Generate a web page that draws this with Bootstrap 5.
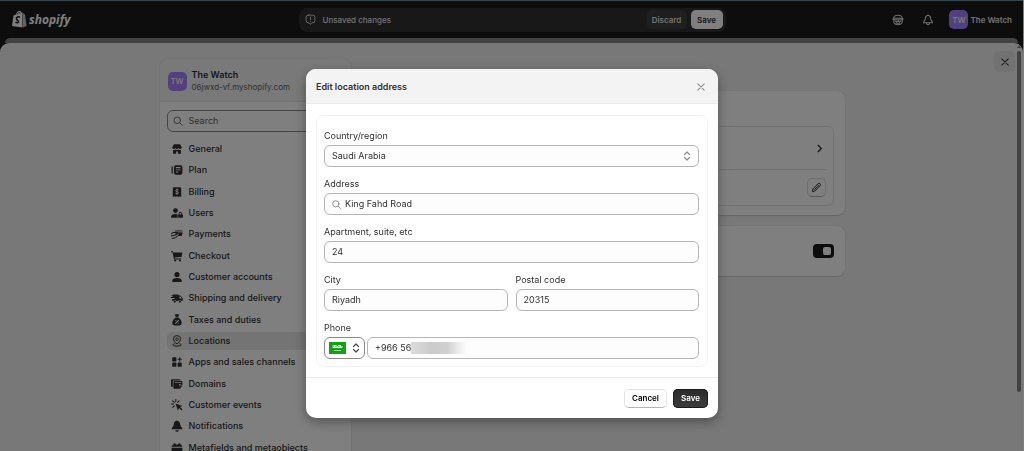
<!DOCTYPE html>
<html lang="en">
<head>
<meta charset="utf-8">
<meta name="viewport" content="width=device-width, initial-scale=1">
<title>The Watch · Locations</title>
<link href="https://cdn.jsdelivr.net/npm/bootstrap@5.3.0/dist/css/bootstrap.min.css" rel="stylesheet">
<style>
body{font-family:Inter,"Liberation Sans",sans-serif;font-size:9px;line-height:14px;color:#303030;background:#1a1a1a;height:100vh;overflow:hidden}
svg{display:block;flex:none}
.shell{height:100vh;border-right:1px solid #fff}
.topbar{height:38px;border-top:1px solid #748c9c;padding:0 11px 0 12px;color:#e3e3e3;font-size:8px}
.wordmark{font-family:"Open Sans",sans-serif;font-weight:700;font-style:italic;font-size:12px;line-height:16px;color:#fff;text-decoration:none;gap:2px}
.side{flex:1 1 0}
.savebar{width:427px;height:24px;border-radius:8px;background:#303030;padding:0 3px 0 6px;font-weight:500}
.savebar span{margin-left:7px}
.savebar button,.btn-flat{font-size:8px;line-height:14px;font-weight:600;border:0;border-radius:5px;height:19px;padding:0 5px}
.savebar .discard{background:#3e3e3e;color:#e3e3e3;width:40px}
.savebar .keep{background:#fff;color:#303030;width:32px}
.tools{gap:15px}
.tools>svg{margin-left:3px}
.who{gap:2px}
.avatar{width:19px;height:19px;border-radius:5px;background:#a680ff;color:#fff;font-size:8px;font-weight:500}
.under-sheet{height:5px;margin:0 5px;border-radius:7px 7px 0 0;background:#848484}
.sheet{background:#f1f1f1;border-radius:9px 9px 0 0;min-height:0}
.wrap{max-width:685px;padding-top:16px}
.sheet-pad{padding-right:19px}
.sidebar{width:191px;background:#fff;border-radius:8px 8px 0 0;box-shadow:0 0 1px #999}
.shop-head{height:43px;background:#f3f3f3;border-bottom:1px solid #ebebeb;padding:2px 8px 0;border-radius:8px 8px 0 0;line-height:13px;gap:5px}
.shop-url{color:#616161;font-size:8px}
.find{height:22px;border:1px solid #8a8a8a;border-radius:6px;padding:0 5px;margin:8px 7px 0;gap:6px}
.find input,.field input{border:0;background:none;outline:0;padding:0;width:100%;min-width:0;color:inherit}
.find input::placeholder{color:#616161}
.menu{height:317px;margin:8px 7px 0}
.menu a{height:18px;flex:none;padding:0 4px;gap:6px;border-radius:5px;color:#303030;text-decoration:none;font-weight:500}
.menu a.active{background:#e8e8e8}
.menu svg{width:12px;height:12px;fill:#303030}
.main-col{padding-top:32px;gap:11px}
.panel{background:#fff;border-radius:8px;box-shadow:0 1px 1px #ccc,0 0 1px #bbb;padding:11px 11px 9px}
.second{height:50px;padding-top:9px}
.inner{border:1px solid #e3e3e3;border-radius:6px;padding:0 7px}
.line-a{height:43px;border-bottom:1px solid #e3e3e3;padding-right:2px}
.line-b{height:35px}
.icon-btn{width:19px;height:19px;border-radius:5px;border:1px solid #dcdcdc;border-bottom-color:#b0b0b0;background:#fff;padding:0}
.toggle{appearance:none;width:21px;height:14px;border-radius:4px;background:#1a1a1a;margin:0;display:flex;justify-content:flex-end;padding:3px}
.toggle::before{content:"";width:8px;height:8px;border-radius:2px;background:#fff}
.close-sheet{position:absolute;top:8px;right:8px;width:21px;height:21px;border:0;border-radius:5px;background:#e5e5e5;padding:0}
.scroller{position:absolute;top:0;right:2px;bottom:59px;width:4px}
.scroller i{width:4px;border-radius:2px;background:#858585}
.scroller b{border:2px solid transparent;border-bottom:3px solid #858585;border-top:0;margin:2px 0 3px}
.modal-backdrop{--bs-backdrop-opacity:.5}
.modal-dialog{max-width:412px;margin:69px auto 0}
.modal-content{border:0;border-radius:10px;overflow:hidden;box-shadow:0 4px 12px rgba(0,0,0,.35);color:#303030}
.modal-header{height:35px;background:#f3f3f3;padding:2px 10px 0;border-bottom:1px solid #ebebeb}
.modal-header h1{font-size:9px;line-height:14px;font-weight:600}
.modal-header button{border:0;background:none;padding:0;margin-right:3px}
.modal-body{padding:11px 10px 10px}
.form-box{border:1px solid #f0f0f0;border-radius:8px;padding:13px 8px 7px 7px;gap:10px}
.form-box label{margin-bottom:2px;display:block}
.field{height:22px;border:1px solid #b5b5b5;border-radius:6px;background:#fdfdfd;padding:0 7px;position:relative}
.field select{appearance:none;border:0;background:none;outline:0;padding:0;width:100%;color:inherit}
.phone-row{gap:2px}
.flag-field{width:41px;padding:0 4px;border-color:#8a8a8a}
.flag-field select{position:absolute;inset:0;opacity:0}
.mask{position:absolute;left:43px;top:4px;width:56px;height:12px;background:linear-gradient(90deg,#dcdcdc,#cbcbcb 35%,#d0d0d0 65%,#ececec 85%,#fdfdfd)}
.modal-footer{padding:10px 10px;height:41px;border-top:1px solid #ebebeb;gap:6px}
.modal-footer>*{margin:0}
.cancel{background:#fff;border:1px solid #e3e3e3!important;border-bottom-color:#b5b5b5!important;width:43px}
.save{background:linear-gradient(#2a2a2a,#3c3c3c);color:#fff;box-shadow:inset 0 0 0 1px #1a1a1a;width:35px}
</style>
</head>
<body>
<div class="shell d-flex flex-column">
<header class="topbar d-flex align-items-center flex-shrink-0">
  <div class="side d-flex">
    <a href="#" class="wordmark d-flex align-items-center">
      <svg width="15" height="17" viewBox="0 0 30 34"><path fill="#fff" d="M3 9l5-2c1-4 4-7 7-7 2 0 3 1 4 3l2 0 0 30L0 30z"/><path fill="#c4c4c4" d="M22 4l4 3 3 23-7 3z"/><path d="M10 7c1-3 3-4 5-4 1 1 1 2 1 3" fill="none" stroke="#1a1a1a" stroke-width="1.5"/><path d="M16 12c-5-2-8 1-7 4 1 3 5 3 4 6-1 2-4 2-6 0" fill="none" stroke="#1a1a1a" stroke-width="3"/></svg>shopify</a>
  </div>
  <div class="savebar d-flex align-items-center">
    <svg width="11" height="11" viewBox="0 0 20 20" fill="none" stroke="#e3e3e3" stroke-width="1.6" stroke-linecap="round" stroke-linejoin="round"><path d="M6 2h8q4 0 4 4v6q0 4-4 4h-1.500l-2.500 3-2.500-3H6q-4 0-4-4V6q0-4 4-4zM10 5.500v4.500M10 13v.1"/></svg>
    <span class="me-auto">Unsaved changes</span>
    <button type="button" class="discard me-1">Discard</button>
    <button type="button" class="keep">Save</button>
  </div>
  <div class="side tools d-flex align-items-center justify-content-end">
    <svg width="12" height="12" viewBox="0 0 20 20" fill="none" stroke="#e3e3e3" stroke-width="1.700" stroke-linejoin="round"><path d="M3 7q0-5 7-5t7 5M2 7h16v2.500H2zM3 9.500v4q0 2.500 3 3.500 4 1.500 8 0 3-1 3-3.500v-4M5 11.500q2.500 3 5 0 2.500 3 5 0M6.500 14.500q3.500 2 7 0"/></svg>
    <svg width="12" height="12" viewBox="0 0 20 20" fill="none" stroke="#e3e3e3" stroke-width="1.700" stroke-linejoin="round"><path d="M10 2Q5.500 2.500 5.500 8c0 3-3 4-3 6.500h15c0-2.500-3-3.500-3-6.500Q14.500 2.500 10 2zM7.500 15c0 4 5 4 5 0"/></svg>
    <div class="who d-flex align-items-center"><span class="avatar d-flex align-items-center justify-content-center">TW</span>
    <span class="fw-semibold">The Watch</span></div>
  </div>
</header>
<div class="under-sheet flex-shrink-0"></div>
<div class="sheet flex-grow-1 position-relative">
 <div class="sheet-pad h-100 overflow-hidden">
  <div class="wrap mx-auto d-flex">
    <aside class="sidebar flex-shrink-0">
      <div class="shop-head d-flex align-items-center">
        <span class="avatar d-flex align-items-center justify-content-center">TW</span>
        <div><div class="fw-semibold">The Watch</div><div class="shop-url">06jwxd-vf.myshopify.com</div></div>
      </div>
      <label class="find d-flex align-items-center">
        <svg width="10" height="10" viewBox="0 0 20 20" fill="none" stroke="#616161" stroke-width="1.800" stroke-linecap="round"><circle cx="8.500" cy="8.500" r="6.500"/><path d="M13.500 13.500l5 5"/></svg>
        <input type="search" placeholder="Search" aria-label="Search">
      </label>
      <nav class="menu d-flex flex-column justify-content-between">
        <a href="#" class="d-flex align-items-center"><svg viewBox="0 0 20 20"><path d="M5 2h10l3 5q0 3-2.500 3-2 0-2.700-1.500Q12 10 10 10T7.200 8.500Q6.500 10 4.500 10 2 10 2 7zM3.500 11.500q2 .5 3.700-.7 2.800 1.600 5.600 0 1.700 1.200 3.700.7V18h-5v-4h-3v4h-5z"/></svg>General</a>
        <a href="#" class="d-flex align-items-center"><svg viewBox="0 0 20 20"><path fill-rule="evenodd" d="M8 2h8q3 0 3 3v10q0 3-3 3H8q-3 0-3-3V5q0-3 3-3zM8 5v2h8V5zM8 9v1.500h8V9zM8 12.500V14h4v-1.500zM1 4h2v12H1z"/></svg>Plan</a>
        <a href="#" class="d-flex align-items-center"><svg viewBox="0 0 20 20"><path d="M5 2h10q2 0 2 2v14.500l-2.500-1.500-2.300 1.500L10 17l-2.200 1.500L5.500 17 3 18.500V4q0-2 2-2z"/><path d="M12.500 7q-.5-1-2.500-1-2.300 0-2.300 1.700c0 2.500 4.800 1.100 4.800 3.600q0 1.700-2.500 1.700-2 0-2.700-1M10 4.500v10" fill="none" stroke="#fff" stroke-width="1.500"/></svg>Billing</a>
        <a href="#" class="d-flex align-items-center"><svg viewBox="0 0 20 20"><circle cx="7.500" cy="6" r="4"/><path d="M0 17q0-5.500 7.500-5.500 2 0 3.500.6V18H1.500Q0 18 0 17z"/><path fill-rule="evenodd" d="M12 12.500h.8V11q0-3 2.700-3t2.700 3v1.500H20V18h-8zM14.300 12.500h2.400V11q0-1.400-1.200-1.400T14.300 11z"/></svg>Users</a>
        <a href="#" class="d-flex align-items-center"><svg viewBox="0 0 20 20"><path d="M7 4h11q2 0 1.700 1.500L8 6Q5.500 6 7 4zM5 8l14.300-1-1 5q-.3 1.500-2 1.500h-5L13 10z"/><path d="M0 9.500l4-2h6q2 0 0 2L7 10M0 13l4 0 7-3M1 17h4q3 0 6-4" fill="none" stroke="#303030" stroke-width="1.700"/></svg>Payments</a>
        <a href="#" class="d-flex align-items-center"><svg viewBox="0 0 20 20"><path d="M0 2h3l1 2h15l-1.500 7.500L6 12.500l.3 1.500H17v1.700H5L2.500 3.700H0z"/><circle cx="7" cy="17.500" r="1.700"/><circle cx="15" cy="17.500" r="1.700"/></svg>Checkout</a>
        <a href="#" class="d-flex align-items-center"><svg viewBox="0 0 20 20"><circle cx="10" cy="6" r="4.300"/><path d="M2 17q0-5.500 8-5.500t8 5.500q0 1.500-1.500 1.500h-13Q2 18.500 2 17z"/></svg>Customer accounts</a>
        <a href="#" class="d-flex align-items-center"><svg viewBox="0 0 20 20"><path fill-rule="evenodd" d="M3 4h8q2 0 2 2h3l3.500 5v4h-2a3 3 0 0 0-5.500 0H9a3 3 0 0 0-5.500 0H2v-3.500h4V10H0V8.500h3V7H1V5.500h2zM14 7.500V11h4l-2.300-3.500z"/><circle cx="6.200" cy="16" r="1.900"/><circle cx="14.800" cy="16" r="1.900"/></svg>Shipping and delivery</a>
        <a href="#" class="d-flex align-items-center"><svg viewBox="0 0 20 20"><path d="M6 0l2 1 2-1 2 1 2-1-2 5H8zM7.500 6h5Q18 10 18 15q0 4-4 4H6q-4 0-4-4 0-5 5.500-9z"/><path d="M7.500 15.500l5-5M8 10.800v.2M12 15v.2" stroke="#fff" stroke-width="1.700" stroke-linecap="round"/></svg>Taxes and duties</a>
        <a href="#" class="active d-flex align-items-center" aria-current="page"><svg viewBox="0 0 20 20"><path d="M10 15q-6-4-6-8.500a6 5.500 0 0 1 12 0Q16 11 10 15zM6 14.500q-3 .5-3 2 0 2 7 2t7-2q0-1.500-3-2" fill="none" stroke="#303030" stroke-width="1.600"/><circle cx="10" cy="7" r="2.200" fill="none" stroke="#303030" stroke-width="1.500"/></svg>Locations</a>
        <a href="#" class="d-flex align-items-center"><svg viewBox="0 0 20 20"><rect x="2" y="2" width="7" height="7" rx="1.500"/><rect x="2" y="11" width="7" height="7" rx="1.500"/><rect x="11" y="11" width="7" height="7" rx="1.500"/><path d="M13.700 2h1.800v2.600H18v1.800h-2.500V9h-1.800V6.400H11V4.600h2.700z"/></svg>Apps and sales channels</a>
        <a href="#" class="d-flex align-items-center"><svg viewBox="0 0 20 20"><path d="M0 4q0-2 2-2h12q2 0 2 2H3v11q-3 0-3-2z"/><path fill-rule="evenodd" d="M4 7q0-2 2-2h11q2 0 2 2v5l-6-2.500 2.500 8.500H6q-2 0-2-2zM6 7v1.300h11V7z"/><path d="M13.500 11.500l6 2-2.500 1.200-1.200 2.800z"/></svg>Domains</a>
        <a href="#" class="d-flex align-items-center"><svg viewBox="0 0 20 20"><path d="M7.500 7.500L19 11.500l-4 2 4 3.500-1.500 2-4-4-2 4z"/><path d="M8 1v3.500M1 8.500h3.500M2.500 3l3 2.500M13.500 3l-2.500 2.500M3 14l2.500-2.500" stroke="#303030" stroke-width="1.700" stroke-linecap="round"/></svg>Customer events</a>
        <a href="#" class="d-flex align-items-center"><svg viewBox="0 0 20 20"><path d="M10 1Q5 2 4.500 8c0 3-3.500 4-3.500 7.500h18C19 12 15.500 11 15.500 8 15 2 10 1 10 1zM7 17h6q-.5 2.500-3 2.500T7 17z"/></svg>Notifications</a>
        <a href="#" class="d-flex align-items-center"><svg viewBox="0 0 20 20"><path d="M4 4q0-2 2-2t2 2h4q0-2 2-2t2 2q3 1 3 4H1q0-3 3-4zM1 9.500h18V18H1z"/></svg>Metafields and metaobjects</a>
      </nav>
    </aside>
    <main class="main-col flex-grow-1 d-flex flex-column ms-2 ps-1">
      <section class="panel">
        <div class="inner mt-4">
          <div class="line-a d-flex align-items-center justify-content-end"><svg width="9" height="9" viewBox="0 0 10 10" fill="none" stroke="#303030" stroke-width="1.500" stroke-linecap="round" stroke-linejoin="round"><path d="M3.500 1.500L7 5 3.500 8.500"/></svg></div>
          <div class="line-b d-flex align-items-center justify-content-end"><button type="button" class="icon-btn d-flex align-items-center justify-content-center" aria-label="Edit"><svg width="11" height="11" viewBox="0 0 20 20" fill="none" stroke="#303030" stroke-width="1.800" stroke-linejoin="round"><path d="M2.500 17.500l1-5L13 3q2-1.500 3.500 0t0 3.500L7 16.500zM11.500 4.500l4 4M6 14l6-6"/></svg></button></div>
        </div>
      </section>
      <section class="panel d-flex align-items-center justify-content-end second"><input type="checkbox" class="toggle" checked aria-label="Fulfill online orders"></section>
    </main>
  </div>
 </div>
 <button type="button" class="close-sheet d-flex align-items-center justify-content-center" aria-label="Close settings"><svg width="8" height="8" viewBox="0 0 10 10" stroke="#303030" stroke-width="1.300" stroke-linecap="round"><path d="M1 1l8 8M9 1l-8 8"/></svg></button>
 <div class="scroller d-flex flex-column" aria-hidden="true"><b></b><i class="flex-grow-1"></i></div>
</div>
</div>

<div class="modal-backdrop show"></div>
<div class="modal show d-block" tabindex="-1" role="dialog" aria-labelledby="dlg-title">
  <div class="modal-dialog">
    <form class="modal-content">
      <div class="modal-header">
        <h1 class="m-0" id="dlg-title">Edit location address</h1>
        <button type="button" aria-label="Close"><svg width="8" height="8" viewBox="0 0 10 10" stroke="#8a8a8a" stroke-width="1.300" stroke-linecap="round"><path d="M1 1l8 8M9 1l-8 8"/></svg></button>
      </div>
      <div class="modal-body">
        <div class="form-box d-flex flex-column">
          <div><label for="country">Country/region</label>
            <div class="field d-flex align-items-center"><select id="country"><option>Saudi Arabia</option></select><svg width="8" height="10" viewBox="0 0 8 10" fill="none" stroke="#8a8a8a" stroke-width="1.200" stroke-linecap="round" stroke-linejoin="round"><path d="M1.500 3.500L4 1l2.500 2.500M1.500 6.500L4 9l2.500-2.500"/></svg></div></div>
          <div><label for="address">Address</label>
            <div class="field d-flex align-items-center"><svg width="9" height="9" viewBox="0 0 20 20" fill="none" stroke="#8a8a8a" stroke-width="2" stroke-linecap="round"><circle cx="8.500" cy="8.500" r="7"/><path d="M14 14l5 5"/></svg><input id="address" type="text" class="ms-1" value="King Fahd Road"></div></div>
          <div><label for="apt">Apartment, suite, etc</label>
            <div class="field d-flex align-items-center"><input id="apt" type="text" value="24"></div></div>
          <div class="d-flex gap-2">
            <div class="flex-fill"><label for="city">City</label><div class="field d-flex align-items-center"><input id="city" type="text" value="Riyadh"></div></div>
            <div class="flex-fill"><label for="zip">Postal code</label><div class="field d-flex align-items-center"><input id="zip" type="text" value="20315"></div></div>
          </div>
          <div><label for="phone">Phone</label>
            <div class="d-flex phone-row">
              <div class="field flag-field d-flex align-items-center justify-content-between flex-shrink-0">
                <svg width="17" height="12" viewBox="0 0 34 24"><path fill="#14a014" d="M0 0h34v24H0z"/><path d="M8 11V7m3 4V8m3 3V6m3 5V8m3 3V6m3 5V7m3 4V8M8 11h18M9 7h6m3 0h6" stroke="#fff" stroke-width="1.800"/><path d="M10 17h14" stroke="#bfe8bf" stroke-width="1.500"/></svg>
                <svg width="8" height="10" viewBox="0 0 8 10" fill="none" stroke="#4a4a4a" stroke-width="1.200" stroke-linecap="round" stroke-linejoin="round"><path d="M1.500 3.500L4 1l2.500 2.500M1.500 6.500L4 9l2.500-2.500"/></svg>
                <select aria-label="Country code"><option>+966</option></select>
              </div>
              <div class="field d-flex align-items-center flex-grow-1"><input id="phone" type="tel" value="+966 56"><span class="mask"></span></div>
            </div></div>
        </div>
      </div>
      <div class="modal-footer flex-nowrap">
        <button type="button" class="btn-flat cancel">Cancel</button>
        <button type="submit" class="btn-flat save">Save</button>
      </div>
    </form>
  </div>
</div>
<script src="https://cdn.jsdelivr.net/npm/bootstrap@5.3.0/dist/js/bootstrap.bundle.min.js"></script>
</body>
</html>
